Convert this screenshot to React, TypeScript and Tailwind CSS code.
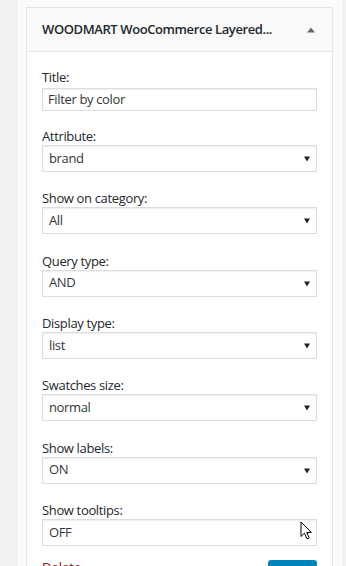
import React from "react";

const fields = [
  { label: "Attribute:", value: "brand" },
  { label: "Show on category:", value: "All" },
  { label: "Query type:", value: "AND" },
  { label: "Display type:", value: "list" },
  { label: "Swatches size:", value: "normal" },
  { label: "Show labels:", value: "ON" },
  { label: "Show tooltips:", value: "OFF" },
];

function SelectBox({ value, cursor }: { value: string; cursor?: boolean }) {
  return (
    <div className="relative flex h-[27px] items-center justify-between border border-[#dddddd] bg-white pl-[6px] pr-[6px] text-[13px] tracking-[-0.35px] text-[#32373c] shadow-[inset_0_1px_2px_rgba(0,0,0,0.07)]">
      <span>{value}</span>
      <svg width="6" height="6" viewBox="0 0 6 6" className="mt-[1px]">
        <path d="M0 0.5 H6 L3 5.5 Z" fill="#222" />
      </svg>
      {cursor && (
        <svg
          width="13"
          height="19"
          viewBox="0 0 13 19"
          className="absolute left-[257px] top-[1px]"
        >
          <path
            d="M1 1 L1 15.5 L4.4 12.2 L7 17.8 L9.2 16.8 L6.7 11.4 L11.4 11.4 Z"
            fill="#fff"
            stroke="#000"
            strokeWidth="1"
            strokeLinejoin="round"
          />
        </svg>
      )}
    </div>
  );
}

export default function App() {
  return (
    <div
      className="h-[566px] overflow-hidden bg-[#f1f1f1] pl-[18px]"
      style={{ fontFamily: '"Open Sans", "Liberation Sans", sans-serif' }}
    >
      <div className="h-full w-[324px] bg-[#fbfbfb] pl-[8px] pr-[9px] pt-[7px]">
        <div className="border border-[#e5e5e5] bg-white">
          <div className="flex h-[44px] items-center justify-between border-b border-[#e5e5e5] bg-[#f9f9f9] pl-[15px] pr-[16px]">
            <span className="text-[13px] font-semibold tracking-[-0.4px] text-[#23282d]">
              WOODMART WooCommerce Layered...
            </span>
            <svg width="8" height="6" viewBox="0 0 8 6" className="mr-[1px]">
              <path d="M0 5.5 L4 0.5 L8 5.5 Z" fill="#666b70" />
            </svg>
          </div>
          <div className="px-[15px] pt-[17px] pb-[40px]">
            <div className="text-[13px] leading-[17px] tracking-[-0.35px] text-[#23282d]">Title:</div>
            <div className="mt-[2px] flex h-[23px] items-center border border-[#dddddd] bg-white pl-[5px] text-[13px] tracking-[-0.35px] text-[#32373c] shadow-[inset_0_1px_2px_rgba(0,0,0,0.07)]">
              Filter by color
            </div>
            {fields.map((f, i) => (
              <div key={f.label} className={i === 0 ? "mt-[17px]" : "mt-[18.33px]"}>
                <div className="text-[13px] leading-[17px] tracking-[-0.35px] text-[#23282d]">{f.label}</div>
                <SelectBox value={f.value} cursor={f.label === "Show tooltips:"} />
              </div>
            ))}
            <div className="mt-[14px] flex items-start justify-between">
              <a className="-mt-[2px] text-[13px] leading-[18px] text-[#a00]">Delete</a>
              <button className="h-[28px] w-[49px] rounded-[3px] bg-[#0085ba] text-[13px] text-white">
                Save
              </button>
            </div>
          </div>
        </div>
      </div>
    </div>
  );
}
